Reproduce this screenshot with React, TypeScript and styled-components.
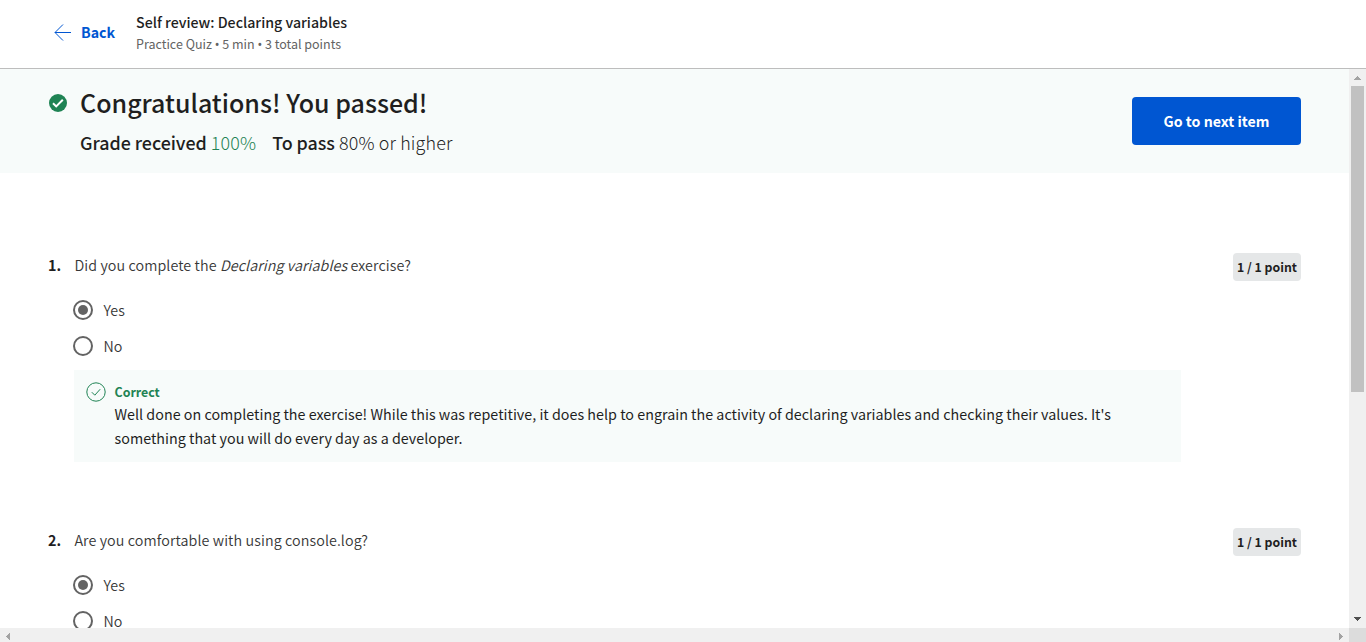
import React from "react";
import styled, { createGlobalStyle } from "styled-components";

const GlobalStyle = createGlobalStyle`
  * { box-sizing: border-box; }
  html, body { margin: 0; padding: 0; background: #fff; overflow: hidden; }
  body { font-family: "Noto Sans CJK SC", "Noto Sans", sans-serif; color: #1f1f1f; }
`;

const Page = styled.div`
  display: flex;
  flex-direction: column;
  width: 1366px;
  height: 642px;
  overflow: hidden;
`;

const Header = styled.header`
  display: flex;
  flex: none;
  height: 69px;
  padding: 12px 0 0 54px;
  border-bottom: 1px solid #bdbdbd;
`;

const BackLink = styled.a`
  display: flex;
  align-items: center;
  width: 82px;
  height: 40px;
  gap: 9px;
  color: #0056d2;
  font-size: 14.2px;
  font-weight: 700;
  line-height: 24px;
`;

const HeaderText = styled.div`
  display: flex;
  flex-direction: column;
`;

const HeaderTitle = styled.div`
  font-size: 14.2px;
  font-weight: 500;
  line-height: 21px;
  white-space: nowrap;
`;

const HeaderMeta = styled.div`
  font-size: 12.5px;
  line-height: 21px;
  color: #636363;
  white-space: nowrap;
`;

const Dot = styled.span`
  font-family: "Noto Sans", sans-serif;
`;

const Body = styled.div`
  display: grid;
  flex: 1;
  min-height: 0;
  grid-template-columns: 1349px 17px;
  grid-template-rows: 559px 14px;
`;

const Content = styled.main`
  overflow: hidden;
`;

const Banner = styled.section`
  display: flex;
  justify-content: space-between;
  height: 104px;
  padding: 15px 48px 0 49px;
  background: #f7fbfa;
`;

const BannerLeft = styled.div`
  display: flex;
  gap: 13px;
  & > svg { margin-top: 10px; }
`;

const BannerTitle = styled.h1`
  margin: 0;
  font-size: 25px;
  font-weight: 500;
  line-height: 36px;
  white-space: nowrap;
`;

const GradeLine = styled.div`
  display: flex;
  gap: 16px;
  margin-top: 8px;
  font-size: 17.9px;
  font-weight: 300;
  line-height: 28px;
  white-space: nowrap;
  letter-spacing: 0.15px;
  b { font-weight: 500; letter-spacing: -0.05px; }
`;

const Green = styled.span`
  color: #1f8354;
`;

const NextButton = styled.button`
  width: 169px;
  height: 48px;
  margin-top: 13px;
  padding: 0;
  border: 0;
  border-radius: 4px;
  background: #0056d2;
  color: #fff;
  font-family: inherit;
  font-size: 14.2px;
  font-weight: 700;
  line-height: 24px;
`;

const QuestionList = styled.div`
  padding-top: 80px;
`;

const Question = styled.section`
  display: grid;
  grid-template-columns: 26px 1107px 1fr;
  height: 275px;
  padding: 0 48px;
  align-items: start;
`;

const Num = styled.div`
  font-size: 14.3px;
  font-weight: 700;
  line-height: 24px;
`;

const Prompt = styled.div`
  height: 39px;
  padding-left: 0.4px;
  color: #373737;
  font-size: 14.3px;
  font-weight: 350;
  letter-spacing: 0.1px;
  line-height: 24px;
  white-space: nowrap;
`;

const Option = styled.div`
  display: flex;
  align-items: center;
  gap: 10.5px;
  height: 36px;
  margin-left: -1px;
  color: #373737;
  font-size: 14.3px;
  font-weight: 350;
  line-height: 24px;
`;

const Radio = styled.span<{ $on?: boolean }>`
  display: flex;
  flex: none;
  align-items: center;
  justify-content: center;
  width: 20px;
  height: 20px;
  border: 2px solid #636363;
  border-radius: 50%;
  &::after {
    content: "";
    width: 10px;
    height: 10px;
    border-radius: 50%;
    background: ${(p) => (p.$on ? "#636363" : "transparent")};
  }
`;

const PointsColumn = styled.div`
  display: flex;
  justify-content: flex-end;
`;

const Points = styled.span`
  width: 68px;
  height: 28px;
  border-radius: 4px;
  background: #e5e7e8;
  font-size: 12.3px;
  font-weight: 700;
  line-height: 28px;
  text-align: center;
  white-space: nowrap;
`;

const Feedback = styled.div`
  display: flex;
  gap: 8.5px;
  width: 1107px;
  height: 92px;
  margin-top: 6px;
  padding: 12px;
  background: #f7fbfa;
`;

const FeedbackTitle = styled.div`
  font-size: 12.4px;
  font-weight: 700;
  line-height: 20px;
  color: #1f8354;
`;

const FeedbackText = styled.div`
  font-size: 14.3px;
  letter-spacing: 0.014px;
  line-height: 24px;
  white-space: nowrap;
`;

const VBar = styled.div`
  display: flex;
  flex-direction: column;
  align-items: center;
  justify-content: space-between;
  background: #f0f0f0;
  padding: 7px 0;
`;

const Thumb = styled.div`
  width: 13px;
  height: 306px;
  margin: 6px 0 auto;
  background: #c1c1c1;
`;

const HBar = styled.div`
  display: flex;
  align-items: center;
  justify-content: space-between;
  padding: 3px 6px 0;
  background: #f0f0f0;
`;

const Corner = styled.div`
  background: #dcdcdc;
`;

const ArrowSvg = styled.svg`
  flex: none;
`;

const Arrow = ({ d, w, h, fill = "#a3a3a3" }: { d: string; w: number; h: number; fill?: string }) => (
  <ArrowSvg width={w} height={h} viewBox={`0 0 ${w} ${h}`} shapeRendering="crispEdges">
    <path d={d} fill={fill} />
  </ArrowSvg>
);

const Options = () => (
  <>
    <Option><Radio $on />Yes</Option>
    <Option><Radio />No</Option>
  </>
);

export default function App() {
  return (
    <Page>
      <GlobalStyle />
      <Header>
        <BackLink>
          <svg width="18" height="18" viewBox="0 0 18 18" fill="none" stroke="#0056d2" strokeWidth="1">
            <path d="M17 9.5H1M9 1.5l-8 8 8 8" />
          </svg>
          <span>Back</span>
        </BackLink>
        <HeaderText>
          <HeaderTitle>Self review: Declaring variables</HeaderTitle>
          <HeaderMeta>Practice Quiz <Dot>•</Dot> 5 min <Dot>•</Dot> 3 total points</HeaderMeta>
        </HeaderText>
      </Header>
      <Body>
        <Content>
          <Banner>
            <BannerLeft>
              <svg width="18" height="18" viewBox="0 0 18 18">
                <circle cx="9" cy="9" r="9" fill="#1f8354" />
                <path d="M4 9.3l3.2 3.1 6.6-6.7" fill="none" stroke="#fff" strokeWidth="2" />
              </svg>
              <div>
                <BannerTitle>Congratulations! You passed!</BannerTitle>
                <GradeLine>
                  <span><b>Grade received</b> <Green>100%</Green></span>
                  <span><b>To pass</b> 80% or higher</span>
                </GradeLine>
              </div>
            </BannerLeft>
            <NextButton>Go to next item</NextButton>
          </Banner>
          <QuestionList>
            <Question>
              <Num>1.</Num>
              <div>
                <Prompt>Did you complete the <i>Declaring variables</i> exercise?</Prompt>
                <Options />
                <Feedback>
                  <svg width="20" height="20" viewBox="0 0 20 20" fill="none" stroke="#1f8354" strokeWidth="1">
                    <circle cx="10" cy="10" r="9.2" />
                    <path d="M5.8 10.2l3 3 5.4-6" />
                  </svg>
                  <div>
                    <FeedbackTitle>Correct</FeedbackTitle>
                    <FeedbackText>
                      Well done on completing the exercise! While this was repetitive, it does help to engrain the activity of declaring variables and checking their values. It's
                      <br />
                      something that you will do every day as a developer.
                    </FeedbackText>
                  </div>
                </Feedback>
              </div>
              <PointsColumn><Points>1 / 1 point</Points></PointsColumn>
            </Question>
            <Question>
              <Num>2.</Num>
              <div>
                <Prompt>Are you comfortable with using console.log?</Prompt>
                <Options />
              </div>
              <PointsColumn><Points>1 / 1 point</Points></PointsColumn>
            </Question>
          </QuestionList>
        </Content>
        <VBar>
          <Arrow w={7} h={4} d="M3 0h1v1h1v1h1v1h1v1H0V3h1V2h1V1h1z" />
          <Thumb />
          <Arrow w={7} h={4} fill="#505050" d="M0 0h7v1H6v1H5v1H4v1H3V3H2V2H1V1H0z" />
        </VBar>
        <HBar>
          <Arrow w={4} h={7} d="M4 0v7H3V6H2V5H1V4H0V3h1V2h1V1h1V0z" />
          <Arrow w={4} h={7} d="M0 0v7h1V6h1V5h1V4h1V3H3V2H2V1H1V0z" />
        </HBar>
        <Corner />
      </Body>
    </Page>
  );
}
